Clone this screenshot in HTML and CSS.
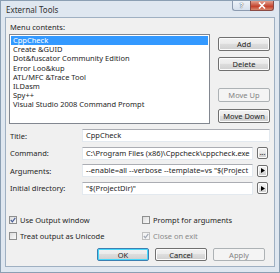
FILE: index.html
```html
<!DOCTYPE html>
<html>
<head>
<meta charset="utf-8">
<link rel="stylesheet" href="styles.css">
</head>
<body>
<div class="window">
  <div class="titlebar">
    <span class="title">External Tools</span>
    <div class="caption-btns">
      <div class="cap help">?</div>
      <div class="cap close"><svg width="8" height="7" viewBox="0 0 8 7"><path d="M1 0.5 L7 6.5 M7 0.5 L1 6.5" stroke="#fff" stroke-width="1.6"/></svg></div>
    </div>
  </div>
  <div class="client">
    <div class="lbl-menu">Menu contents:</div>
    <div class="list-row">
      <div class="listbox">
        <div class="item sel">CppCheck</div>
        <div class="item">Create &amp;GUID</div>
        <div class="item">Dot&amp;fuscator Community Edition</div>
        <div class="item">Error Loo&amp;kup</div>
        <div class="item">ATL/MFC &amp;Trace Tool</div>
        <div class="item">ILDasm</div>
        <div class="item">Spy++</div>
        <div class="item">Visual Studio 2008 Command Prompt</div>
      </div>
      <div class="side-btns">
        <div class="btn b-add">Add</div>
        <div class="btn b-del">Delete</div>
        <div class="btn disabled b-up">Move Up</div>
        <div class="btn b-down">Move Down</div>
      </div>
    </div>
    <div class="form">
      <div class="frow r-title">
        <span class="flbl">Title:</span>
        <div class="input full">CppCheck</div>
      </div>
      <div class="frow r-cmd">
        <span class="flbl">Command:</span>
        <div class="input">C:\Program Files (x86)\Cppcheck\cppcheck.exe</div>
        <div class="btn small">...</div>
      </div>
      <div class="frow r-args">
        <span class="flbl">Arguments:</span>
        <div class="input">--enable=all --verbose --template=vs "$(Project</div>
        <div class="btn small"><svg width="4" height="5" viewBox="0 0 4 5"><path d="M0 0 L4 2.5 L0 5 Z" fill="#000"/></svg></div>
      </div>
      <div class="frow r-dir">
        <span class="flbl">Initial directory:</span>
        <div class="input">"$(ProjectDir)"</div>
        <div class="btn small"><svg width="4" height="5" viewBox="0 0 4 5"><path d="M0 0 L4 2.5 L0 5 Z" fill="#000"/></svg></div>
      </div>
    </div>
    <div class="checks">
      <div class="chk"><span class="box checked"><svg width="6" height="6" viewBox="0 0 6 6"><path d="M0.8 3 L2.4 4.8 L5.3 0.9" stroke="#4a5f97" stroke-width="1.2" fill="none"/></svg></span>Use Output window</div>
      <div class="chk"><span class="box"></span>Prompt for arguments</div>
      <div class="chk"><span class="box"></span>Treat output as Unicode</div>
      <div class="chk dis"><span class="box checked"><svg width="6" height="6" viewBox="0 0 6 6"><path d="M0.8 3 L2.4 4.8 L5.3 0.9" stroke="#a0a7b4" stroke-width="1.2" fill="none"/></svg></span>Close on exit</div>
    </div>
    <div class="bottom-btns">
      <div class="btn wide default">OK</div>
      <div class="btn wide">Cancel</div>
      <div class="btn wide disabled">Apply</div>
    </div>
  </div>
</div>
</body>
</html>
```

FILE: styles.css
```css
* { box-sizing: border-box; }
html, body { margin: 0; padding: 0; background: #fff; }
body {
  font-family: "Noto Sans", "Open Sans", sans-serif;
  font-size: 7.5px;
  color: #1e1e1e;
}
.window {
  width: 280px;
  height: 273px;
  background: #dfe7f0;
  border: 1px solid #8b9fb3;
  padding: 0 4px 5px 4px;
  display: flex;
  flex-direction: column;
}
.titlebar {
  height: 16px;
  display: flex;
  align-items: flex-start;
  justify-content: space-between;
}
.title {
  font-size: 8px;
  color: #333;
  margin: 3px 0 0 1px;
}
.caption-btns { display: flex; margin-right: 1px; }
.cap {
  height: 10px;
  display: flex;
  align-items: center;
  justify-content: center;
  border: 1px solid #8c9bb0;
  border-top: none;
}
.help {
  width: 18px;
  background: linear-gradient(#eef3f9, #d6e0ec);
  font-size: 7px;
  font-weight: bold;
  color: #fff;
  text-shadow: 0 0 1px #3c4d66, 0 0 1px #3c4d66;
  border-radius: 0 0 0 3px;
  border-right: none;
}
.close {
  width: 24px;
  background: linear-gradient(#e3a290, #c8523d 50%, #c5412b 60%, #d88a70);
  border-radius: 0 0 3px 0;
  border-color: #8a4a44;
}
.client {
  flex: 1;
  background: #f0f0f0;
  border: 1px solid #9fb0c2;
  padding: 4px 4px 0 3px;
  display: flex;
  flex-direction: column;
}
.lbl-menu { height: 10px; line-height: 10px; margin-left: 1px; }
.list-row {
  display: flex;
  margin-top: 2px;
  height: 90px;
}
.listbox {
  width: 201px;
  height: 90px;
  background: #fff;
  border: 1px solid #828790;
  padding: 1px;
}
.item {
  height: 9.2px;
  line-height: 9.2px;
  padding-left: 2px;
  white-space: nowrap;
}
.item.sel { background: #3399ff; color: #fff; }
.side-btns {
  margin-left: 8px;
  width: 52px;
  display: flex;
  flex-direction: column;
  padding-top: 3px;
}
.btn {
  height: 14px;
  border: 1px solid #707070;
  border-radius: 2px;
  background: linear-gradient(#f2f2f2 0%, #ebebeb 45%, #dddddd 50%, #cfcfcf 100%);
  display: flex;
  align-items: center;
  justify-content: center;
  box-shadow: inset 0 0 0 1px #fcfcfc;
  white-space: nowrap;
}
.btn.disabled {
  border-color: #adb2b5;
  background: #f4f4f4;
  color: #838383;
  box-shadow: none;
}
.b-del { margin-top: 6px; }
.b-up { margin-top: 17px; }
.b-down { margin-top: 7px; }
.form {
  display: flex;
  flex-direction: column;
  margin-top: 3px;
}
.frow {
  display: flex;
  align-items: center;
  height: 17.5px;
}
.flbl { width: 73px; padding-left: 1px; }
.input {
  height: 13px;
  width: 171px;
  background: #fff;
  border: 1px solid #e3e9ef;
  border-top-color: #abadb3;
  line-height: 11px;
  padding-left: 3px;
  white-space: nowrap;
  overflow: hidden;
}
.input.full { width: 188px; }
.btn.small {
  width: 11px;
  height: 12px;
  margin-left: 4px;
  font-size: 7px;
  line-height: 1;
  padding-bottom: 2px;
}
.btn.small svg { margin-top: 2px; }
.checks {
  display: grid;
  grid-template-columns: 133px 1fr;
  row-gap: 6px;
  margin-top: 18px;
}
.chk { display: flex; align-items: center; height: 10px; }
.box {
  width: 8px;
  height: 8px;
  border: 1px solid #8e8f8f;
  background: linear-gradient(135deg, #dcdcdc, #fafafa);
  margin-right: 3px;
  display: flex;
  align-items: center;
  justify-content: center;
}
.chk.dis { color: #8a8a8a; }
.chk.dis .box { border-color: #c0c0c0; background: #f4f4f4; }
.bottom-btns {
  display: flex;
  justify-content: flex-end;
  gap: 6px;
  margin-top: 7px;
  padding-right: 5px;
}
.btn.wide { width: 52px; height: 13px; }
.btn.default { border-color: #3c7fb1; box-shadow: inset 0 0 0 1px #48d8fb; }
```
